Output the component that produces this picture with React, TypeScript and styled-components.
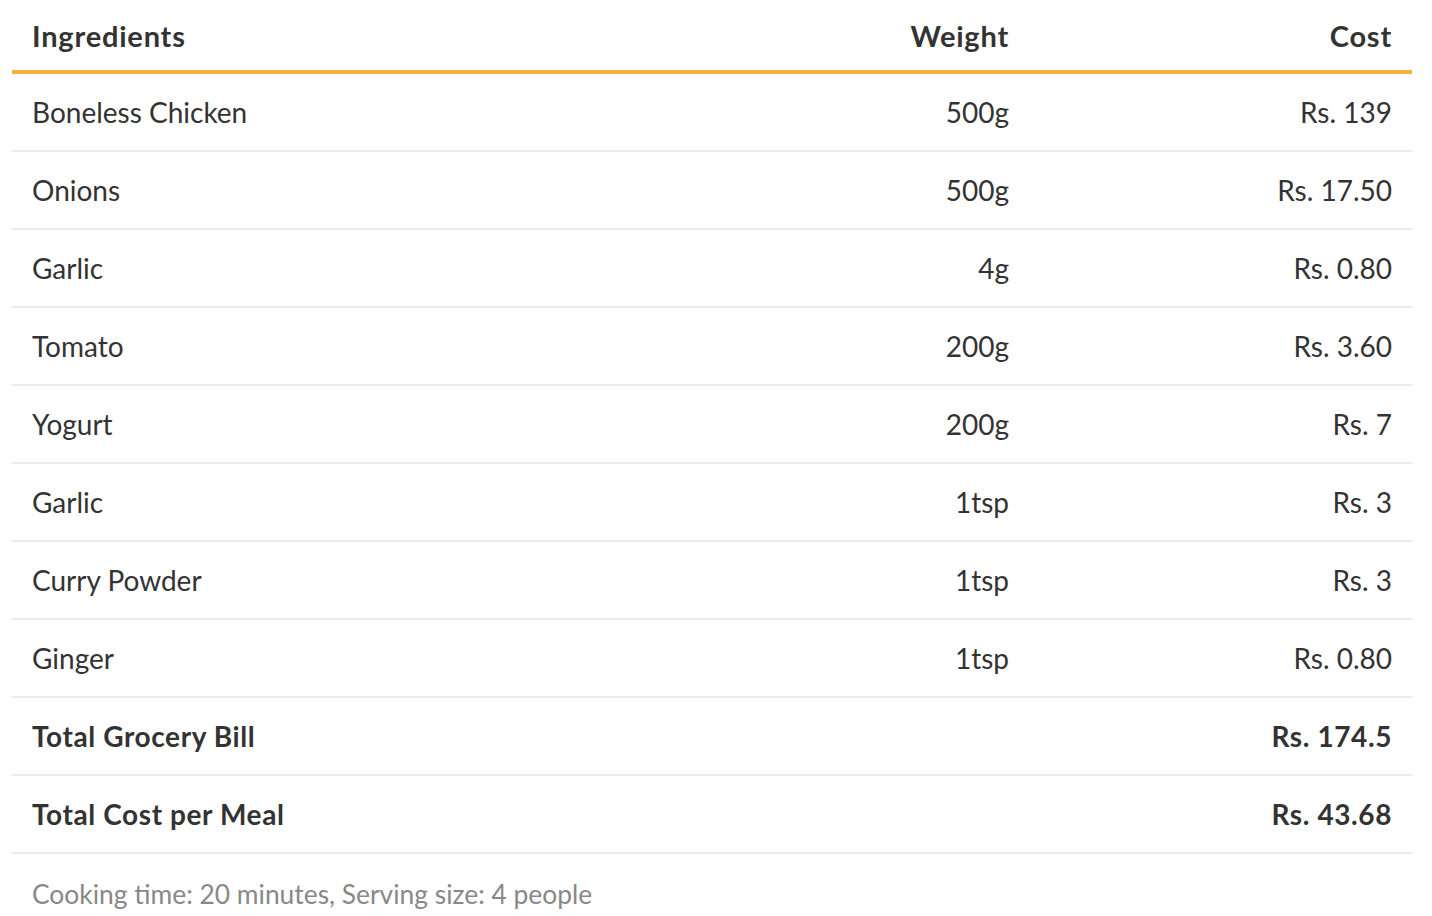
import React from "react";
import styled, { createGlobalStyle } from "styled-components";

const Global = createGlobalStyle`
  body {
    margin: 0;
    background: #ffffff;
    font-family: "Lato", "Open Sans", sans-serif;
    color: #333333;
  }
`;

const Wrapper = styled.div`
  padding: 0 20px 0 12px;
`;

const Table = styled.table`
  width: 1400px;
  border-collapse: collapse;
  table-layout: fixed;
`;

const HeadCell = styled.th<{ $align?: "left" | "right" }>`
  text-align: ${(p) => p.$align || "left"};
  font-size: 29px;
  font-weight: 700;
  letter-spacing: 0.8px;
  color: #333333;
  height: 72px;
  padding: 0 20px;
  box-sizing: border-box;
  border-bottom: 4px solid #f4b33f;
  vertical-align: middle;
`;

const Row = styled.tr`
  border-bottom: 2px solid #ebebeb;
`;

const Cell = styled.td<{ $align?: "left" | "right"; $bold?: boolean }>`
  text-align: ${(p) => p.$align || "left"};
  font-size: 28px;
  font-weight: ${(p) => (p.$bold ? 700 : 400)};
  letter-spacing: ${(p) => (p.$bold ? "0.6px" : "0")};
  color: #333333;
  height: 76px;
  padding: 0 20px;
  vertical-align: middle;
`;

const Note = styled.p`
  margin: 0;
  padding: 24px 20px 0;
  font-size: 26.4px;
  color: #888888;
`;

const items: [string, string, string][] = [
  ["Boneless Chicken", "500g", "Rs. 139"],
  ["Onions", "500g", "Rs. 17.50"],
  ["Garlic", "4g", "Rs. 0.80"],
  ["Tomato", "200g", "Rs. 3.60"],
  ["Yogurt", "200g", "Rs. 7"],
  ["Garlic", "1tsp", "Rs. 3"],
  ["Curry Powder", "1tsp", "Rs. 3"],
  ["Ginger", "1tsp", "Rs. 0.80"],
];

const totals: [string, string][] = [
  ["Total Grocery Bill", "Rs. 174.5"],
  ["Total Cost per Meal", "Rs. 43.68"],
];

export default function App() {
  return (
    <Wrapper>
      <Global />
      <Table>
        <colgroup>
          <col />
          <col style={{ width: 300 }} />
          <col style={{ width: 383 }} />
        </colgroup>
        <thead>
          <tr>
            <HeadCell>Ingredients</HeadCell>
            <HeadCell $align="right">Weight</HeadCell>
            <HeadCell $align="right">Cost</HeadCell>
          </tr>
        </thead>
        <tbody>
          {items.map(([name, weight, cost], i) => (
            <Row key={i}>
              <Cell>{name}</Cell>
              <Cell $align="right">{weight}</Cell>
              <Cell $align="right">{cost}</Cell>
            </Row>
          ))}
          {totals.map(([name, cost], i) => (
            <Row key={"t" + i}>
              <Cell $bold>{name}</Cell>
              <Cell />
              <Cell $align="right" $bold>
                {cost}
              </Cell>
            </Row>
          ))}
        </tbody>
      </Table>
      <Note>Cooking time: 20 minutes, Serving size: 4 people</Note>
    </Wrapper>
  );
}
